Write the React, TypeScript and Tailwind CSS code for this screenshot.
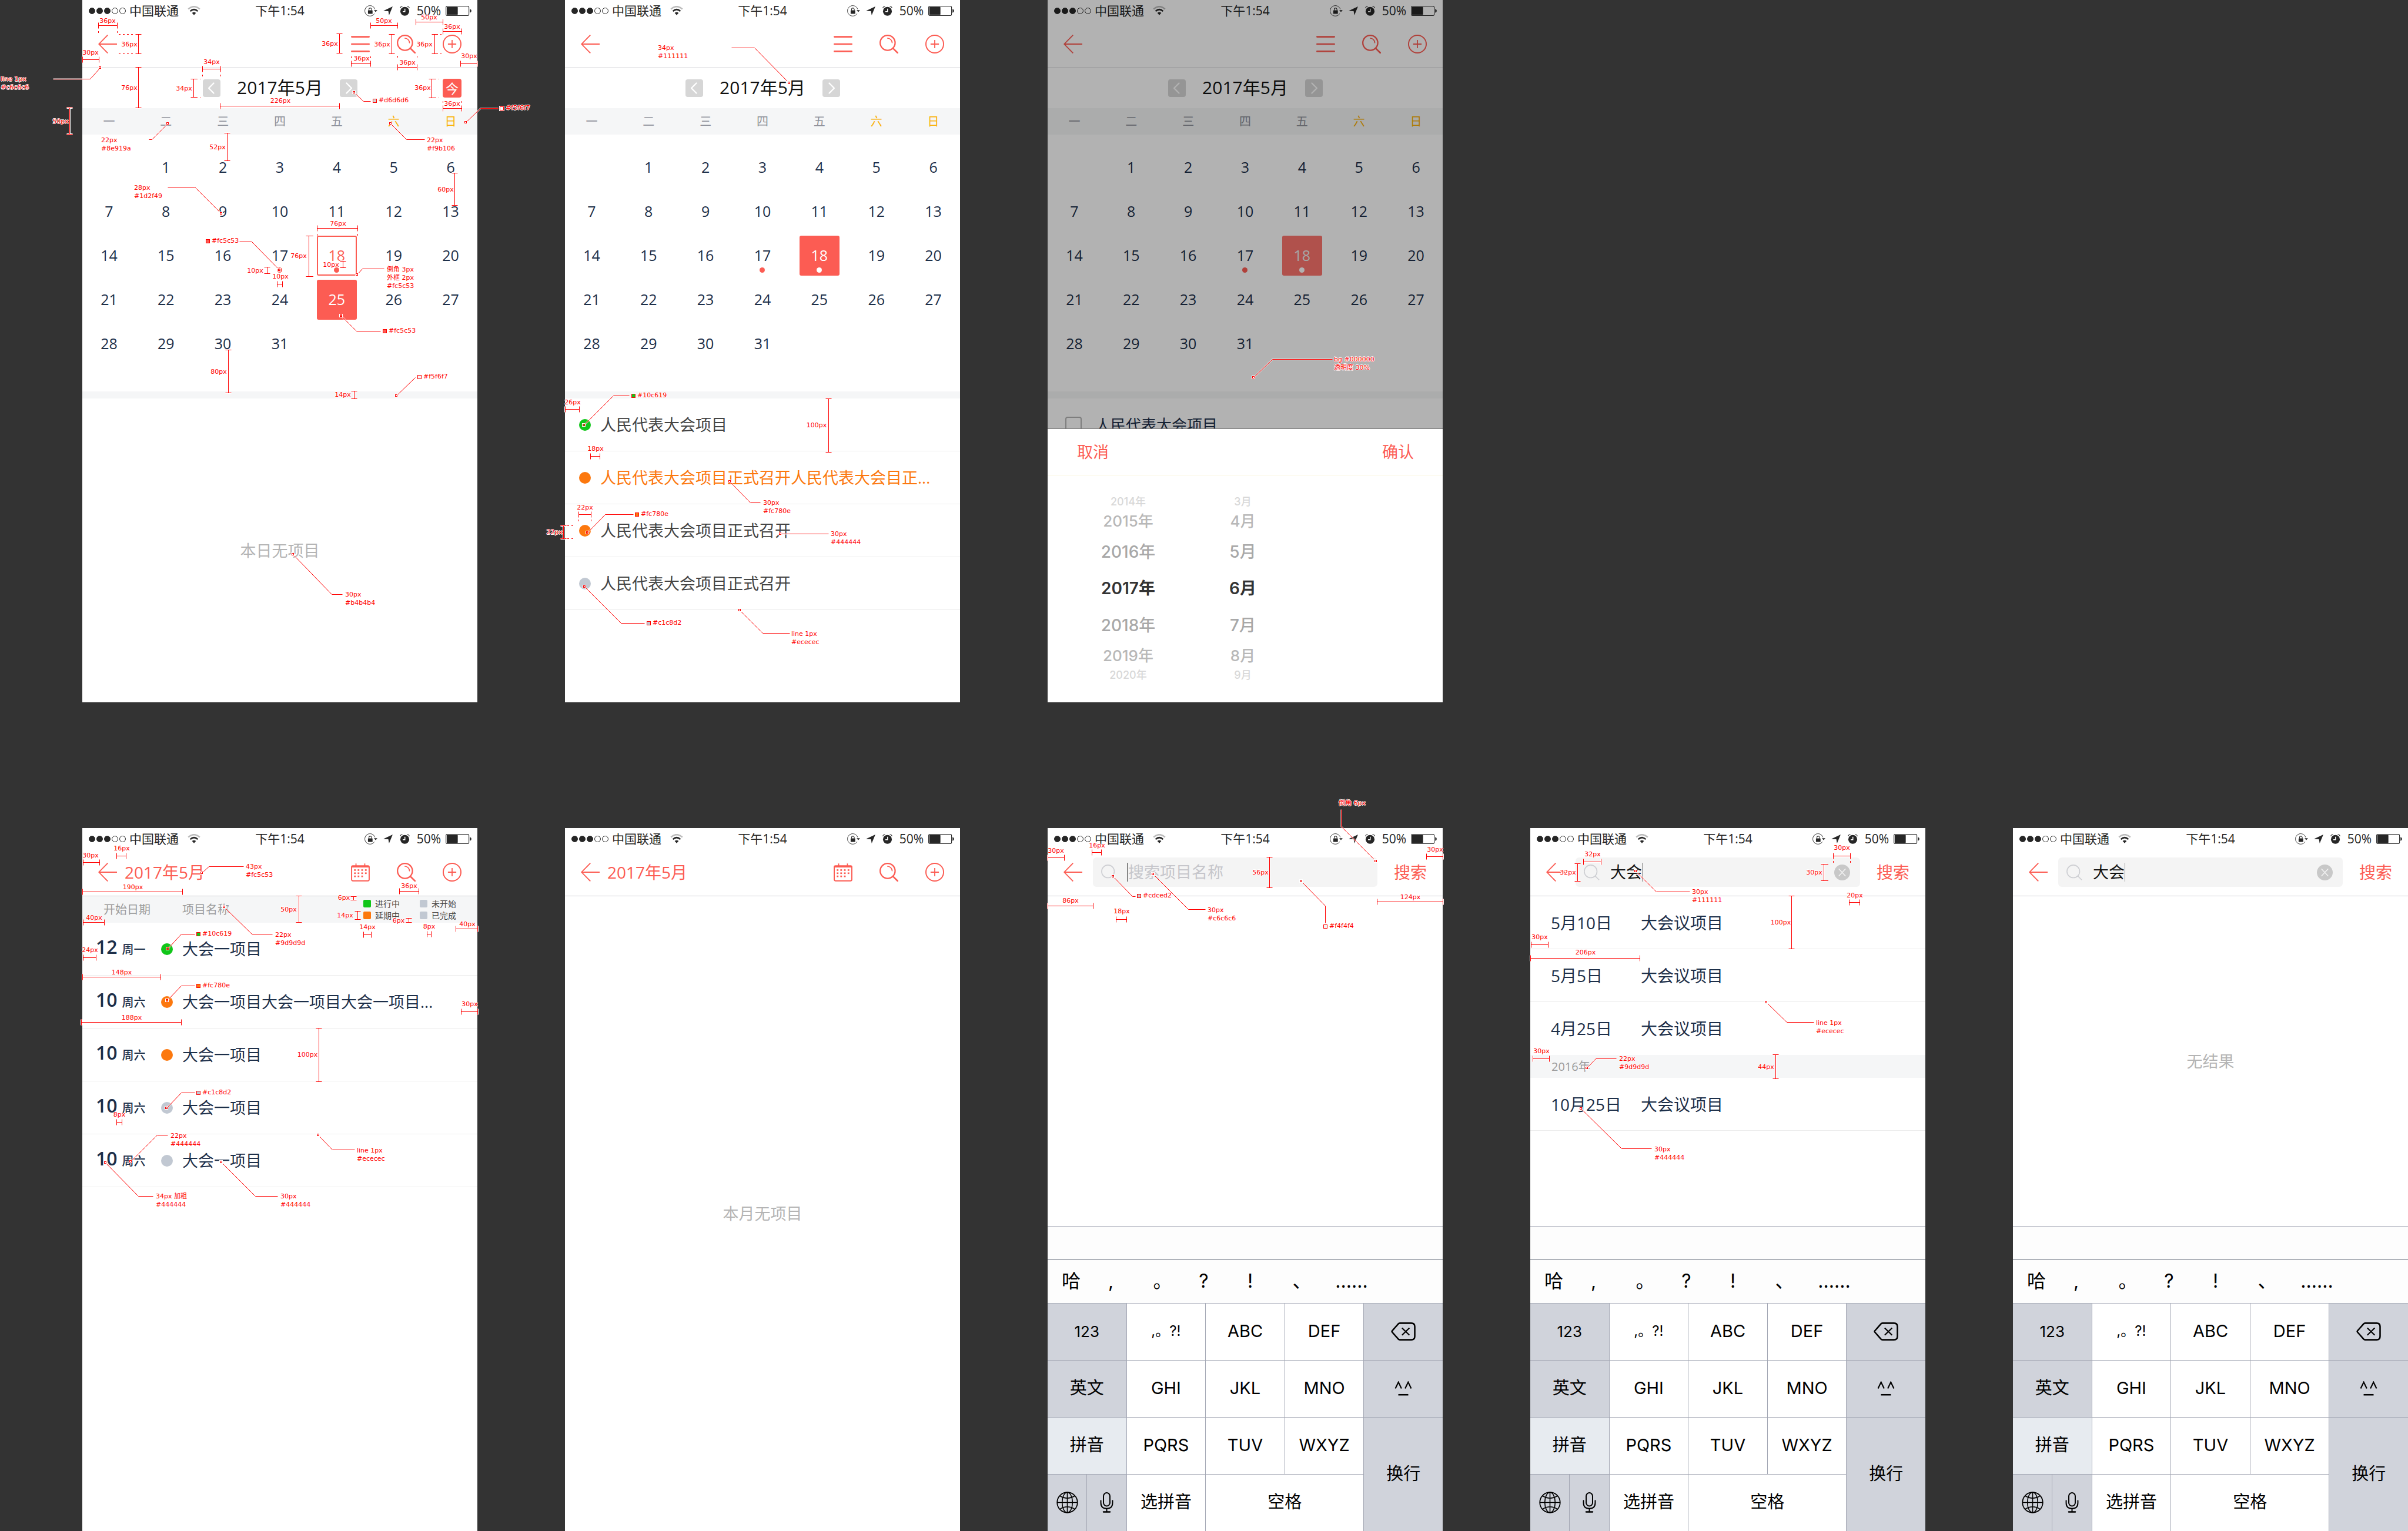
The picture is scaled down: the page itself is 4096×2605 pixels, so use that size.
import React from "react";

/* Notes are recorded in the units of the 750-wide artboard and drawn at this scale. */
const SCALE = 0.896;
const r = (n: number) => Math.round(n * SCALE);

/* ------------------------------------------------------------------ */
/* Spec notes                                                          */
/* ------------------------------------------------------------------ */

type Measure = {
  kind: "h" | "v";
  from: number;
  to: number;
  at: number;
  text: string;
  cx: number;
  cy: number;
  guide?: [number, number];
};
type Leader = {
  kind: "leader";
  points: [number, number][];
  lines: string[];
  x: number;
  y: number;
  swatch?: string;
};
type Note = Measure | Leader;

const h = (from: number, to: number, at: number, text: string, cx: number, cy: number, guide?: [number, number]): Note => ({
  kind: "h", from, to, at, text, cx, cy, guide,
});
const v = (at: number, from: number, to: number, text: string, cx: number, cy: number, guide?: [number, number]): Note => ({
  kind: "v", from, to, at, text, cx, cy, guide,
});
const lead = (points: [number, number][], x: number, y: number, lines: string[], swatch?: string): Note => ({
  kind: "leader", points, lines, x, y, swatch,
});

function measurePath(m: Measure) {
  const a = r(m.from) + 0.5;
  const b = r(m.to) + 0.5;
  const p = r(m.at) + 0.5;
  return m.kind === "h"
    ? `M${a} ${p}H${b}M${a} ${p - 5}V${p + 5}M${b} ${p - 5}V${p + 5}`
    : `M${p} ${a}V${b}M${p - 5} ${a}H${p + 5}M${p - 5} ${b}H${p + 5}`;
}

function guidePath(m: Measure) {
  if (!m.guide) return "";
  const a = r(m.from) + 0.5;
  const b = r(m.to) + 0.5;
  const g0 = r(m.guide[0]);
  const g1 = r(m.guide[1]);
  return m.kind === "h"
    ? `M${a} ${g0}V${g1}M${b} ${g0}V${g1}`
    : `M${g0} ${a}H${g1}M${g0} ${b}H${g1}`;
}

function Notes({ items }: { items: Note[] }) {
  return (
    <div className="pointer-events-none absolute inset-0 z-20 text-[11px] leading-[14px] text-[#f00]">
      <svg className="absolute inset-0 h-full w-full overflow-visible" fill="none" aria-hidden="true">
        {items.map((n, i) => {
          if (n.kind === "leader") {
            const d = "M" + n.points.map(([x, y]) => `${r(x) + 0.5} ${r(y) + 0.5}`).join("L");
            const [mx, my] = n.points[0];
            return (
              <g key={i}>
                <path d={d} stroke="#fff" strokeWidth="3" strokeOpacity="0.5" />
                <path d={d} stroke="#f00" strokeWidth="1" />
                <rect x={r(mx) - 3} y={r(my) - 3} width="6" height="6" fill="#fff" />
                <rect x={r(mx) - 1.5} y={r(my) - 1.5} width="3" height="3" fill={n.swatch ?? "#fff"} stroke="#f00" />
              </g>
            );
          }
          const d = measurePath(n);
          return (
            <g key={i}>
              <path d={d} stroke="#fff" strokeWidth="3" />
              <path d={d} stroke="#f00" strokeWidth="1" />
              <path d={guidePath(n)} stroke="#f00" strokeWidth="1" strokeDasharray="3 4" />
            </g>
          );
        })}
      </svg>
      {items.map((n, i) =>
        n.kind === "leader" ? (
          <div
            key={i}
            className="absolute flex items-center gap-[3px] whitespace-nowrap font-['DejaVu_Sans','Noto_Sans_CJK_SC',sans-serif] [text-shadow:1px_0_0_#fff,-1px_0_0_#fff,0_1px_0_#fff,0_-1px_0_#fff]"
            style={{ left: n.swatch ? r(n.x) - 10 : r(n.x), top: r(n.y) - 7 }}
          >
            {n.swatch && (
              <span className="size-[7px] border border-[#f00] outline outline-white" style={{ backgroundColor: n.swatch }} />
            )}
            <span>
              {n.lines.map((t) => (
                <span key={t} className="block">{t}</span>
              ))}
            </span>
          </div>
        ) : (
          <span
            key={i}
            className="absolute w-[60px] whitespace-nowrap text-center font-['DejaVu_Sans',sans-serif] [text-shadow:1px_0_0_#fff,-1px_0_0_#fff,0_1px_0_#fff,0_-1px_0_#fff]"
            style={{ left: r(n.cx) - 30, top: r(n.cy) - 7 }}
          >
            {n.text}
          </span>
        ),
      )}
    </div>
  );
}

const calendarNotes: Note[] = [
  h(30, 66, 48, "36px", 48, 40, [59, 62]),
  h(0, 31, 113, "30px", 16, 100),
  v(106, 65, 102, "36px", 89, 85, [69, 97]),
  v(488, 64, 101, "36px", 470, 84),
  h(510, 547, 120, "36px", 530, 112, [107, 110]),
  h(547, 598, 48, "50px", 573, 40),
  h(633, 684, 41, "50px", 659, 33),
  v(587, 65, 102, "36px", 569, 85),
  h(598, 635, 127, "36px", 617, 119, [106, 112]),
  v(668, 65, 102, "36px", 650, 85, [672, 682]),
  h(684, 720, 59, "36px", 702, 51),
  h(718, 749, 120, "30px", 734, 107),
  v(106, 127, 204, "76px", 89, 167),
  h(228, 262, 131, "34px", 245, 118, [142, 145]),
  v(211, 150, 184, "34px", 193, 168, [215, 224]),
  h(261, 488, 201, "226px", 376, 192),
  v(663, 149, 185, "36px", 646, 167, [668, 678]),
  h(684, 720, 205, "36px", 702, 197, [192, 195]),
  v(-24, 204, 255, "50px", -41, 231),
  v(275, 252, 305, "52px", 257, 280),
  v(707, 328, 389, "60px", 690, 360),
  lead([[34, 128], [14, 149], [-56, 149]], -155, 151, ["line 1px", "#c6c6c6"]),
  lead([[516, 175], [533, 192], [547, 192]], 562, 191, ["#d6d6d6"], "#d6d6d6"),
  lead([[728, 232], [756, 205], [789, 205]], 804, 205, ["#f5f6f7"], "#f5f6f7"),
  lead([[162, 234], [132, 265], [126, 265]], 36, 267, ["22px", "#8e919a"]),
  lead([[585, 234], [615, 265], [649, 265]], 654, 267, ["22px", "#f9b106"]),
  lead([[263, 405], [213, 355], [162, 355]], 98, 357, ["28px", "#1d2f49"]),
  h(445, 522, 433, "76px", 485, 425, [444, 447]),
  v(430, 447, 524, "76px", 411, 487, [435, 441]),
  lead([[374, 512], [321, 459], [298, 459]], 245, 458, ["#fc5c53"], "#fc5c53"),
  v(350, 507, 519, "10px", 328, 514),
  h(369, 380, 539, "10px", 376, 526),
  v(494, 496, 508, "10px", 472, 503),
  lead([[521, 521], [531, 510], [573, 510]], 578, 512, ["倒角 3px", "外框 2px", "#fc5c53"]),
  lead([[491, 599], [520, 628], [566, 628]], 581, 628, ["#fc5c53"], "#fc5c53"),
  v(277, 664, 745, "80px", 259, 706),
  v(516, 742, 757, "14px", 494, 750),
  lead([[596, 751], [632, 716]], 647, 715, ["#f5f6f7"], "#f5f6f7"),
  lead([[400, 1052], [473, 1128], [493, 1128]], 499, 1129, ["30px", "#b4b4b4"]),
];

const projectNotes: Note[] = [
  lead([[425, 157], [359, 90], [316, 90]], 176, 92, ["34px", "#111111"]),
  lead([[36, 807], [91, 751], [122, 751]], 137, 751, ["#10c619"], "#10c619"),
  h(0, 27, 777, "26px", 14, 764),
  v(500, 757, 858, "100px", 478, 808),
  h(48, 66, 866, "18px", 58, 853),
  h(26, 49, 977, "22px", 38, 964, [987, 991]),
  lead([[42, 1011], [76, 977], [129, 977]], 144, 977, ["#fc780e"], "#fc780e"),
  v(-3, 998, 1022, "22px", -20, 1011, [5, 18]),
  lead([[313, 914], [352, 954], [371, 954]], 376, 955, ["30px", "#fc780e"]),
  lead([[409, 1013], [500, 1013]], 504, 1014, ["30px", "#444444"]),
  lead([[37, 1114], [106, 1183], [151, 1183]], 166, 1183, ["#c1c8d2"], "#c1c8d2"),
  lead([[332, 1159], [375, 1202], [426, 1202]], 430, 1204, ["line 1px", "#ececec"]),
];

const pickerNotes: Note[] = [
  lead([[391, 717], [426, 682], [540, 682]], 543, 683, ["bg #000000", "透明度 30%"]),
];

const monthNotes: Note[] = [
  h(65, 83, 52, "16px", 75, 39),
  h(1, 32, 65, "30px", 16, 52),
  lead([[227, 85], [240, 72], [306, 72]], 310, 74, ["43px", "#fc5c53"]),
  h(0, 190, 121, "190px", 96, 113),
  h(602, 638, 119, "36px", 621, 111),
  v(411, 128, 179, "50px", 392, 155),
  v(515, 129, 136, "6px", 497, 133),
  v(522, 157, 173, "14px", 499, 166),
  h(533, 548, 202, "14px", 541, 189),
  v(619, 171, 179, "6px", 600, 176),
  h(654, 662, 201, "8px", 658, 188),
  h(709, 750, 191, "40px", 731, 183),
  h(1, 41, 179, "40px", 22, 171),
  lead([[162, 229], [188, 201], [213, 201]], 228, 201, ["#10c619"], "#10c619"),
  lead([[269, 149], [321, 201], [361, 201]], 366, 203, ["22px", "#9d9d9d"]),
  h(1, 26, 245, "24px", 14, 232),
  h(0, 148, 282, "148px", 75, 274),
  lead([[161, 327], [188, 299], [213, 299]], 228, 299, ["#fc780e"], "#fc780e"),
  h(719, 750, 348, "30px", 736, 335),
  h(-2, 188, 368, "188px", 94, 360),
  v(449, 379, 481, "100px", 427, 431),
  lead([[160, 531], [188, 502], [213, 502]], 228, 502, ["#c1c8d2"], "#c1c8d2"),
  h(65, 75, 558, "8px", 70, 545),
  lead([[91, 633], [142, 583], [162, 583]], 167, 585, ["22px", "#444444"]),
  lead([[447, 583], [474, 611], [517, 611]], 521, 613, ["line 1px", "#ececec"]),
  lead([[43, 635], [106, 699], [134, 699]], 139, 700, ["34px 加粗", "#444444"]),
  lead([[263, 634], [328, 699], [371, 699]], 376, 700, ["30px", "#444444"]),
];

const searchNotes: Note[] = [
  lead([[623, 62], [557, -3], [557, -36]], 552, -47, ["倒角 6px"]),
  h(84, 102, 46, "16px", 94, 33),
  h(0, 31, 56, "30px", 16, 43),
  h(719, 750, 54, "30px", 736, 41),
  v(421, 55, 113, "56px", 404, 85),
  lead([[124, 92], [161, 129], [166, 129]], 181, 128, ["#cdced2"], "#cdced2"),
  h(0, 86, 147, "86px", 43, 138),
  h(130, 149, 173, "18px", 141, 159),
  lead([[200, 87], [267, 154], [299, 154]], 304, 156, ["30px", "#c6c6c6"]),
  lead([[481, 101], [527, 147], [527, 180]], 535, 186, ["#f4f4f4"], "#f4f4f4"),
  h(625, 750, 140, "124px", 689, 132),
];

const resultNotes: Note[] = [
  h(100, 134, 64, "32px", 118, 50),
  v(89, 67, 101, "32px", 71, 85),
  lead([[200, 82], [239, 121], [302, 121]], 307, 122, ["30px", "#111111"]),
  h(575, 607, 52, "30px", 592, 38, [63, 66]),
  v(557, 68, 99, "30px", 539, 85, [563, 570]),
  h(605, 625, 141, "20px", 616, 128),
  v(496, 128, 229, "100px", 475, 180),
  h(1, 33, 221, "30px", 18, 208),
  h(0, 208, 247, "206px", 105, 237),
  lead([[448, 330], [487, 368], [538, 368]], 542, 370, ["line 1px", "#ececec"]),
  h(5, 36, 437, "30px", 21, 424),
  lead([[107, 455], [124, 437], [163, 437]], 168, 439, ["22px", "#9d9d9d"]),
  v(465, 430, 476, "44px", 447, 454),
  lead([[96, 532], [173, 608], [230, 608]], 235, 610, ["30px", "#444444"]),
];

/* ------------------------------------------------------------------ */
/* Icons                                                               */
/* ------------------------------------------------------------------ */

function WifiIcon() {
  return (
    <svg className="ml-[15px] h-[16px] w-[22px]" viewBox="0 0 24 18" fill="none" aria-hidden="true">
      <path d="M1 6.2Q12 -3.6 23 6.2" stroke="#bbb" strokeWidth="2.8" />
      <path d="M4.8 10.2Q12 3.6 19.2 10.2" stroke="#262626" strokeWidth="2.8" />
      <path d="M8.2 13.6Q12 10.4 15.8 13.6L12 17.8Z" fill="#262626" />
    </svg>
  );
}

function LockIcon() {
  return (
    <svg className="h-[19px] w-[22px]" viewBox="0 0 24 21" fill="none" aria-hidden="true">
      <path d="M19.6 7.4A9.8 9.8 0 1 0 18.6 15.6" stroke="#262626" strokeWidth="1" />
      <path d="M17.6 9.2H24L20.8 12.6Z" fill="#262626" />
      <rect x="6.4" y="9.4" width="8.6" height="6.6" rx="0.6" fill="#262626" />
      <path d="M8.2 9.6V7.6a2.5 2.5 0 0 1 5 0V9.6" stroke="#262626" strokeWidth="1.2" />
    </svg>
  );
}

function LocationIcon() {
  return (
    <svg className="ml-[10px] h-[15px] w-[16px]" viewBox="0 0 18 17" fill="#262626" aria-hidden="true">
      <path d="M18 0L0 8.6L9.6 9L11 17Z" />
    </svg>
  );
}

function AlarmIcon() {
  return (
    <svg className="ml-[12px] h-[17px] w-[17px]" viewBox="0 0 19 18.5" fill="none" aria-hidden="true">
      <circle cx="9.5" cy="10" r="8.4" fill="#262626" />
      <path d="M9.8 5V10.6H5.6" stroke="#fff" strokeWidth="1.6" />
      <path d="M0.6 4.2Q1.4 1 5 0.6M18.4 4.2Q17.6 1 14 0.6" stroke="#262626" strokeWidth="1.2" />
    </svg>
  );
}

function BatteryIcon() {
  return (
    <svg className="ml-[8px] h-[17px] w-[44px]" viewBox="0 0 49 19" fill="none" aria-hidden="true">
      <rect x="0.6" y="0.6" width="43.6" height="17.8" rx="2.4" stroke="#262626" strokeWidth="1.2" />
      <rect x="2" y="2" width="21" height="15" rx="1" fill="#262626" />
      <path d="M46 6Q49 7 49 9.5Q49 12 46 13Z" fill="#262626" />
    </svg>
  );
}

function BackIcon() {
  return (
    <svg className="size-[32px]" viewBox="0 0 36 36" fill="none" stroke="#fc5c53" strokeWidth="2" aria-hidden="true">
      <path d="M18.3 0.6L1.4 18L18.3 35.4M1.4 18H36" />
    </svg>
  );
}

function MenuIcon() {
  return (
    <svg className="size-[32px]" viewBox="0 0 36 36" fill="none" stroke="#fc5c53" strokeWidth="3" strokeLinecap="round" aria-hidden="true">
      <path d="M1.5 4H34.5M1.5 18H34.5M1.5 32H34.5" />
    </svg>
  );
}

function SearchIcon() {
  return (
    <svg className="size-[32px]" viewBox="0 0 36 36" fill="none" stroke="#fc5c53" aria-hidden="true">
      <circle cx="15.6" cy="15.6" r="14.3" strokeWidth="2.6" />
      <path d="M15.4 6.8A8.8 8.8 0 0 1 24.2 15.6" strokeWidth="1.8" strokeLinecap="round" />
      <path d="M25.8 26L34.8 34.8" strokeWidth="3" strokeLinecap="round" />
    </svg>
  );
}

function PlusIcon() {
  return (
    <svg className="size-[32px]" viewBox="0 0 36 36" fill="none" stroke="#fc5c53" aria-hidden="true">
      <circle cx="18" cy="18" r="16.9" strokeWidth="2.2" />
      <path d="M18 10V26M10 18H26" strokeWidth="2" />
    </svg>
  );
}

function CalendarIcon() {
  const dots = [
    [7.6, 14], [14.4, 14], [21.4, 14], [28.4, 14],
    [7.6, 20], [14.4, 20], [21.4, 20], [28.4, 20],
    [7.6, 26], [14.4, 26], [21.4, 26],
  ];
  return (
    <svg className="size-[32px]" viewBox="0 0 36 36" fill="none" aria-hidden="true">
      <rect x="1.2" y="6" width="33.6" height="28.6" rx="2.4" stroke="#fc5c53" strokeWidth="2.2" />
      <path d="M1 5.6H35V9H1Z" fill="#fc5c53" />
      <path d="M9.6 1.4V7M26.4 1.4V7" stroke="#fc5c53" strokeWidth="2" />
      {dots.map(([x, y]) => (
        <rect key={`${x}-${y}`} x={x - 1.6} y={y - 1.5} width="3.2" height="3" fill="#fc5c53" />
      ))}
    </svg>
  );
}

function Chevron({ flip = false }: { flip?: boolean }) {
  return (
    <svg className="size-[30px]" viewBox="0 0 34 34" fill="none" stroke="#fff" strokeWidth="2.6" strokeLinecap="round" strokeLinejoin="round" aria-hidden="true">
      <path d={flip ? "M13 7.4L22.6 17L13 26.6" : "M21 7.4L11.4 17L21 26.6"} />
    </svg>
  );
}

function FieldSearchIcon() {
  return (
    <svg className="h-[27px] w-[27px]" viewBox="0 0 30 30" fill="none" stroke="#cdced2" strokeWidth="1.8" aria-hidden="true">
      <circle cx="13" cy="13" r="12" />
      <path d="M21.6 21.8L29 29.2" />
    </svg>
  );
}

function ClearIcon() {
  return (
    <svg className="size-[27px]" viewBox="0 0 30 30" fill="none" aria-hidden="true">
      <circle cx="15" cy="15" r="15" fill="#c8c8c8" />
      <path d="M8.5 8L21.5 22M21.5 8L8.5 22" stroke="#f4f4f4" strokeWidth="1.6" />
    </svg>
  );
}

function BackspaceIcon() {
  return (
    <svg className="h-[31px] w-[42px]" viewBox="0 0 46 34" fill="none" stroke="#000" strokeWidth="2.8" aria-hidden="true">
      <path d="M16.5 1.5H38Q44.4 1.5 44.4 8V26Q44.4 32.5 38 32.5H16.5Q14.8 32.5 13.6 31.2L2.4 18.4Q1.2 17 2.4 15.6L13.6 2.8Q14.8 1.5 16.5 1.5Z" />
      <path d="M20.6 10.4L34.4 23.8M34.4 10.4L20.6 23.8" strokeWidth="2.4" />
    </svg>
  );
}

function FaceIcon() {
  return (
    <svg className="h-[25px] w-[30px]" viewBox="0 0 33 28" fill="none" stroke="#000" strokeWidth="2.4" aria-hidden="true">
      <path d="M1.4 14L7.2 2L13 14M20 14L25.8 2L31.6 14" />
      <path d="M7 26H26" strokeWidth="2.8" />
    </svg>
  );
}

function GlobeIcon() {
  return (
    <svg className="size-[37px]" viewBox="0 0 42 42" fill="none" stroke="#000" strokeWidth="1.8" aria-hidden="true">
      <circle cx="21" cy="21" r="19.6" strokeWidth="2" />
      <ellipse cx="21" cy="21" rx="10" ry="19.6" />
      <path d="M21 1.4V40.6M1.4 21H40.6M6.6 8.4Q21 17 35.4 8.4M6.6 33.6Q21 25 35.4 33.6" />
    </svg>
  );
}

function MicIcon() {
  return (
    <svg className="h-[35px] w-[23px]" viewBox="0 0 25 39" fill="none" stroke="#000" strokeWidth="2.2" strokeLinecap="round" aria-hidden="true">
      <rect x="6.4" y="1.2" width="12.2" height="25" rx="6.1" />
      <path d="M1.4 16V20Q1.4 31 12.5 31Q23.6 31 23.6 20V16M12.5 31V37" />
      <path d="M6.4 37.4H18.6" strokeWidth="2.8" />
    </svg>
  );
}

/* ------------------------------------------------------------------ */
/* Shared pieces                                                       */
/* ------------------------------------------------------------------ */

function Phone({ children, notes }: { children: React.ReactNode; notes?: Note[] }) {
  return (
    <section className="relative flex min-h-[1195px] min-w-0 flex-col bg-white">
      {children}
      {notes && <Notes items={notes} />}
    </section>
  );
}

function StatusBar() {
  return (
    <div className="grid h-[36px] grid-cols-[1fr_auto_1fr] items-center text-[21px] leading-[34px] text-[#262626]">
      <div className="flex items-center pl-[11px]">
        <span className="flex gap-[2px]">
          {[true, true, true, false, false].map((on, i) => (
            <span
              key={i}
              className={on ? "size-[11px] rounded-full border border-[#262626] bg-[#262626]" : "size-[11px] rounded-full border border-[#262626]"}
            />
          ))}
        </span>
        <span className="ml-[6px]">中国联通</span>
        <WifiIcon />
      </div>
      <span>下午1:54</span>
      <div className="flex items-center justify-end pr-[10px]">
        <LockIcon />
        <LocationIcon />
        <AlarmIcon />
        <span className="ml-[12px]">50%</span>
        <BatteryIcon />
      </div>
    </div>
  );
}

function NavBar({ title, list = false }: { title?: string; list?: boolean }) {
  return (
    <header className="h-[116px] border-b border-[#c6c6cb]">
      <StatusBar />
      <nav className="flex h-[78px] items-center px-[27px]" aria-label="导航">
        <button type="button" aria-label="返回"><BackIcon /></button>
        {title && <h1 className="ml-[13px] text-[28px] leading-[36px] text-[#fc5c53]">{title}</h1>}
        <div className="ml-auto flex gap-[46px]">
          <button type="button" aria-label={list ? "日历" : "列表"}>{list ? <CalendarIcon /> : <MenuIcon />}</button>
          <button type="button" aria-label="搜索"><SearchIcon /></button>
          <button type="button" aria-label="新建"><PlusIcon /></button>
        </div>
      </nav>
    </header>
  );
}

function Calendar({ today, marked, outlined, selected, muted }: { today?: boolean; marked: number[]; outlined?: number; selected: number; muted?: boolean }) {
  const cells = [null, ...Array.from({ length: 31 }, (_, i) => i + 1)];
  return (
    <div>
      <div className="grid h-[68px] grid-cols-[1fr_auto_1fr] items-center">
        <span />
        <div className="flex items-center">
          <button type="button" aria-label="上个月" className="rounded-[4px] bg-[#d6d6d6]"><Chevron /></button>
          <h2 className="w-[203px] pb-[2px] text-center text-[30px] leading-[40px] text-[#111]">2017年5月</h2>
          <button type="button" aria-label="下个月" className="rounded-[4px] bg-[#d6d6d6]"><Chevron flip /></button>
        </div>
        {today && (
          <button type="button" className="mr-[27px] size-[32px] justify-self-end rounded-[4px] bg-[#fc5c53] text-[22px] leading-[32px] text-white">
            今
          </button>
        )}
      </div>
      <div className="bg-[#f5f6f7]">
        <div className="-mx-[3px] grid h-[45px] grid-cols-7 items-center text-center text-[20px] leading-[30px] text-[#8e919a]">
          {["一", "二", "三", "四", "五", "六", "日"].map((d, i) => (
            <span key={d} className={i > 4 ? "text-[#f9b106]" : ""}>{d}</span>
          ))}
        </div>
      </div>
      <div className="-mx-[3px] grid grid-cols-7 justify-items-center pt-[18px] pb-[44px] text-[25px] leading-[30px] text-[#1d2f49]">
        {cells.map((d, i) => {
          if (d === null) return <span key={i} />;
          const filled = d === selected;
          const ring = d === outlined;
          const tone = filled
            ? muted
              ? "bg-[#fc756d] text-[#eee]"
              : "bg-[#fc5c53] text-white"
            : ring
              ? "border-2 border-[#fc5c53] text-[#fc5c53]"
              : "";
          return (
            <div key={i} className="flex h-[75px] items-center">
              <button type="button" className={`relative flex size-[68px] items-center justify-center rounded-[3px] pb-[2px] ${tone}`}>
                {d}
                {marked.includes(d) && (
                  <span
                    className={
                      filled
                        ? "absolute bottom-[5px] size-[9px] rounded-full bg-white"
                        : ring
                          ? "absolute bottom-[3px] size-[9px] rounded-full bg-[#fc5c53]"
                          : "absolute bottom-[5px] size-[9px] rounded-full bg-[#fc5c53]"
                    }
                  />
                )}
              </button>
            </div>
          );
        })}
      </div>
      <div className="h-[12px] bg-[#f5f6f7]" />
    </div>
  );
}

function Empty({ children }: { children: React.ReactNode }) {
  return <p className="flex flex-1 items-center justify-center text-[27px] leading-[36px] text-[#b4b4b4]">{children}</p>;
}

const dotColor = {
  green: "bg-[#10c619]",
  orange: "bg-[#fc780e]",
  gray: "bg-[#c1c8d2]",
};
type Tone = keyof typeof dotColor;

/* ------------------------------------------------------------------ */
/* Screens                                                             */
/* ------------------------------------------------------------------ */

function CalendarScreen() {
  return (
    <Phone notes={calendarNotes}>
      <NavBar />
      <Calendar today marked={[17, 18]} outlined={18} selected={25} />
      <Empty>本日无项目</Empty>
    </Phone>
  );
}

function ProjectScreen() {
  const items: { tone: Tone; name: string; late?: boolean }[] = [
    { tone: "green", name: "人民代表大会项目" },
    { tone: "orange", name: "人民代表大会项目正式召开人民代表大会目正...", late: true },
    { tone: "orange", name: "人民代表大会项目正式召开" },
    { tone: "gray", name: "人民代表大会项目正式召开" },
  ];
  return (
    <Phone notes={projectNotes}>
      <NavBar />
      <Calendar marked={[17, 18]} selected={18} />
      <ul>
        {items.map((it, i) => (
          <li key={i} className="flex h-[90px] items-center gap-[16px] border-b border-[#ececec] pl-[24px] text-[27px] leading-[36px]">
            <span className={`size-[20px] rounded-full ${dotColor[it.tone]}`} />
            <span className={it.late ? "whitespace-nowrap text-[#fc780e]" : "whitespace-nowrap text-[#444]"}>{it.name}</span>
          </li>
        ))}
      </ul>
    </Phone>
  );
}

const wheelRows = [
  { year: "2014年", month: "3月", style: "h-[25px] text-[18px] text-[#d8d8d8]" },
  { year: "2015年", month: "4月", style: "h-[41px] text-[26px] text-[#b8b8b8]" },
  { year: "2016年", month: "5月", style: "h-[63px] text-[28px] text-[#a8a8a8]" },
  { year: "2017年", month: "6月", style: "h-[62px] text-[28px] text-[#333] font-semibold" },
  { year: "2018年", month: "7月", style: "h-[63px] text-[28px] text-[#a8a8a8]" },
  { year: "2019年", month: "8月", style: "h-[41px] text-[26px] text-[#b8b8b8]" },
  { year: "2020年", month: "9月", style: "h-[25px] text-[18px] text-[#d8d8d8]" },
];

function PickerScreen() {
  return (
    <Phone notes={pickerNotes}>
      <NavBar />
      <Calendar marked={[17, 18]} selected={18} muted />
      <label className="flex h-[90px] items-center gap-[23px] pl-[30px] text-[26px] leading-[36px] text-[#1d2f49]">
        <input type="checkbox" className="size-[28px] appearance-none rounded-[4px] border-2 border-[#b4b4b4]" />
        人民代表大会项目
      </label>
      <div className="absolute inset-0 flex flex-col justify-end bg-black/30">
        <div className="border-t border-[#777] bg-white">
          <div className="flex h-[79px] items-center justify-between border-b border-[#faf6e0] pr-[49px] pl-[50px] text-[27px] leading-[36px] text-[#fc5c53]">
            <button type="button">取消</button>
            <button type="button">确认</button>
          </div>
          <div className="flex pt-[32px] pb-[34px] pl-[40px] text-center font-['Inter','Noto_Sans_CJK_SC',sans-serif] font-medium">
            <ul className="w-[194px]" aria-label="年">
              {wheelRows.map((w) => (
                <li key={w.year} className={`flex items-center justify-center leading-none ${w.style}`}>{w.year}</li>
              ))}
            </ul>
            <ul className="w-[196px]" aria-label="月">
              {wheelRows.map((w) => (
                <li key={w.month} className={`flex items-center justify-center leading-none ${w.style}`}>{w.month}</li>
              ))}
            </ul>
          </div>
        </div>
      </div>
    </Phone>
  );
}

function MonthListScreen() {
  const legend: { tone: Tone; text: string }[] = [
    { tone: "green", text: "进行中" },
    { tone: "gray", text: "未开始" },
    { tone: "orange", text: "延期中" },
    { tone: "gray", text: "已完成" },
  ];
  const rows: { day: string; week: string; tone: Tone; name: string }[] = [
    { day: "12", week: "周一", tone: "green", name: "大会一项目" },
    { day: "10", week: "周六", tone: "orange", name: "大会一项目大会一项目大会一项目..." },
    { day: "10", week: "周六", tone: "orange", name: "大会一项目" },
    { day: "10", week: "周六", tone: "gray", name: "大会一项目" },
    { day: "10", week: "周六", tone: "gray", name: "大会一项目" },
  ];
  return (
    <Phone notes={monthNotes}>
      <NavBar title="2017年5月" list />
      <table className="w-full table-fixed border-separate border-spacing-0 text-left">
        <colgroup>
          <col className="w-[134px]" />
          <col />
          <col className="w-[194px]" />
        </colgroup>
        <thead className="bg-[#f5f6f7] text-[20px] leading-[30px] text-[#9d9d9d]">
          <tr className="h-[45px]">
            <th className="p-0 pl-[36px] font-normal whitespace-nowrap">开始日期</th>
            <th className="p-0 pl-[36px] font-normal">项目名称</th>
            <th className="p-0 font-normal">
              <ul className="grid grid-cols-[96px_auto] text-[14px] leading-[20px] text-[#444]">
                {legend.map((l) => (
                  <li key={l.text} className="flex items-center gap-[7px]">
                    <span className={`size-[13px] rounded-[2px] ${dotColor[l.tone]}`} />
                    {l.text}
                  </li>
                ))}
              </ul>
            </th>
          </tr>
        </thead>
        <tbody className="text-[#1d2f49]">
          {rows.map((row, i) => (
            <tr key={i}>
              <td className="h-[90px] border-b border-[#ececec] p-0 pl-[23px]">
                <div className="flex items-baseline gap-[8px] pb-[2px] leading-[40px]">
                  <b className="text-[32px] font-semibold">{row.day}</b>
                  <span className="text-[20px] font-medium">{row.week}</span>
                </div>
              </td>
              <td colSpan={2} className="h-[90px] border-b border-[#ececec] p-0">
                <div className="flex items-center gap-[16px] text-[27px] leading-[36px]">
                  <span className={`size-[20px] rounded-full ${dotColor[row.tone]}`} />
                  {row.name}
                </div>
              </td>
            </tr>
          ))}
        </tbody>
      </table>
    </Phone>
  );
}

function EmptyMonthScreen() {
  return (
    <Phone>
      <NavBar title="2017年5月" list />
      <Empty>本月无项目</Empty>
    </Phone>
  );
}

function SearchBar({ id, value }: { id: string; value?: string }) {
  return (
    <header className="h-[116px] border-b border-[#c6c6cb]">
      <StatusBar />
      <form className="flex h-[78px] items-center pr-[27px] pl-[27px]">
        <button type="button" aria-label="返回"><BackIcon /></button>
        <label htmlFor={id} className="ml-[18px] flex h-[50px] flex-1 items-center rounded-[6px] bg-[#f4f4f4] pr-[17px] pl-[14px] text-[27px]">
          <FieldSearchIcon />
          {value ? (
            <>
              <input id={id} type="text" defaultValue={value} aria-label="搜索项目名称" className="ml-[18px] bg-transparent text-[#111] outline-none [field-sizing:content]" />
              <span className="h-[32px] w-px bg-[#888]" />
              <button type="button" aria-label="清除" className="ml-auto"><ClearIcon /></button>
            </>
          ) : (
            <>
              <span className="ml-[17px] h-[32px] w-[2px] bg-[#888]" />
              <input id={id} type="text" placeholder="搜索项目名称" aria-label="搜索项目名称" className="min-w-0 flex-1 bg-transparent outline-none placeholder:text-[#c6c6cb]" />
            </>
          )}
        </label>
        <button type="button" className="ml-[28px] text-[28px] leading-[36px] text-[#fc5c53]">搜索</button>
      </form>
    </header>
  );
}

const darkKey = "bg-[#d0d3db]";
const keys: { label?: string; icon?: React.ReactNode; name?: string; style: string }[] = [
  { label: "123", style: `col-span-2 text-[26px] ${darkKey}` },
  { label: ",。?!", style: "col-span-2 bg-white text-[24px]" },
  { label: "ABC", style: "col-span-2 bg-white" },
  { label: "DEF", style: "col-span-2 bg-white" },
  { name: "删除", icon: <BackspaceIcon />, style: `col-span-2 ${darkKey}` },
  { label: "英文", style: `col-span-2 ${darkKey}` },
  { label: "GHI", style: "col-span-2 bg-white" },
  { label: "JKL", style: "col-span-2 bg-white" },
  { label: "MNO", style: "col-span-2 bg-white" },
  { name: "表情", icon: <FaceIcon />, style: `col-span-2 ${darkKey}` },
  { label: "拼音", style: "col-span-2 bg-[#e7ebf0]" },
  { label: "PQRS", style: "col-span-2 bg-white" },
  { label: "TUV", style: "col-span-2 bg-white" },
  { label: "WXYZ", style: "col-span-2 bg-white" },
  { label: "换行", style: `col-span-2 row-span-2 ${darkKey}` },
  { name: "切换键盘", icon: <GlobeIcon />, style: darkKey },
  { name: "语音", icon: <MicIcon />, style: darkKey },
  { label: "选拼音", style: "col-span-2 bg-white" },
  { label: "空格", style: "col-span-4 bg-white" },
];

function Keyboard() {
  return (
    <div className="mt-auto font-['Inter','Noto_Sans_CJK_SC',sans-serif] text-black">
      <div className="h-[57px] border-t border-[#a9adba] bg-[#fdfdfd]" />
      <div className="flex h-[74px] items-center border-t border-[#6e7582] bg-[#fdfdfd] pb-[2px] text-[32px] leading-[40px]">
        <button type="button" className="ml-[12px] w-[56px]">哈</button>
        {[",", "。", "?", "!", "、"].map((c) => (
          <button key={c} type="button" className={c === "。" || c === "、" ? "w-[79px] pl-[18px]" : "w-[79px]"}>{c}</button>
        ))}
        <button type="button" className="w-[108px]">......</button>
      </div>
      <div className="grid auto-rows-[96px] grid-cols-10 gap-px border-t border-[#a9adba] bg-[#a3a7b4] text-[29px]">
        {keys.map((k) => (
          <button key={k.label ?? k.name} type="button" aria-label={k.name} className={`flex items-center justify-center pb-[2px] ${k.style}`}>
            {k.icon ?? k.label}
          </button>
        ))}
      </div>
    </div>
  );
}

function SearchScreen() {
  return (
    <Phone notes={searchNotes}>
      <SearchBar id="search-blank" />
      <Keyboard />
    </Phone>
  );
}

function ResultRow({ date, name, last }: { date: string; name: string; last?: boolean }) {
  return (
    <li className={`flex h-[90px] items-center pl-[35px] text-[28px] leading-[36px] text-[#1d2f49] ${last ? "" : "border-b border-[#ececec]"}`}>
      <span className="w-[153px]">{date}</span>
      <span>{name}</span>
    </li>
  );
}

function ResultScreen() {
  return (
    <Phone notes={resultNotes}>
      <SearchBar id="search-results" value="大会" />
      <ul>
        <ResultRow date="5月10日" name="大会议项目" />
        <ResultRow date="5月5日" name="大会议项目" />
        <ResultRow date="4月25日" name="大会议项目" last />
      </ul>
      <h2 className="bg-[#f5f6f7] pl-[36px] text-[20px] leading-[39px] text-[#9d9d9d]">2016年</h2>
      <ul>
        <ResultRow date="10月25日" name="大会议项目" />
      </ul>
      <Keyboard />
    </Phone>
  );
}

function NoResultScreen() {
  return (
    <Phone>
      <SearchBar id="search-none" value="大会" />
      <Empty>无结果</Empty>
      <Keyboard />
    </Phone>
  );
}

export default function App() {
  return (
    <main className="flex min-h-screen flex-col gap-[214px] overflow-hidden bg-[#333] pl-[140px] font-['Open_Sans','Noto_Sans_CJK_SC',sans-serif]">
      <div className="grid grid-cols-5 gap-x-[149px]">
        <CalendarScreen />
        <ProjectScreen />
        <PickerScreen />
      </div>
      <div className="grid flex-1 grid-cols-5 gap-x-[149px]">
        <MonthListScreen />
        <EmptyMonthScreen />
        <SearchScreen />
        <ResultScreen />
        <NoResultScreen />
      </div>
    </main>
  );
}
